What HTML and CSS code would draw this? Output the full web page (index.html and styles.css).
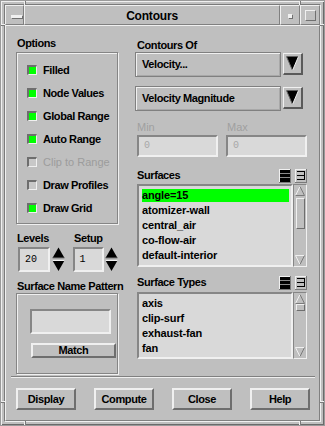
FILE: index.html
```html
<!DOCTYPE html>
<html>
<head>
<meta charset="utf-8">
<link rel="stylesheet" href="styles.css">
</head>
<body>
<div class="win">
  <div class="frame">
    <div class="titlebar">
      <div class="tb-cell tb-menu"><span class="menu-bar"></span></div>
      <div class="tb-cell tb-title">Contours</div>
      <div class="tb-cell tb-min"><span class="min-box"></span></div>
      <div class="tb-cell tb-max"><span class="max-box"></span></div>
    </div>
    <div class="panel">
      <div class="main">
        <div class="col-left">
          <div class="lbl">Options</div>
          <div class="group opts">
            <div class="chk"><span class="ind on"></span>Filled</div>
            <div class="chk"><span class="ind on"></span>Node Values</div>
            <div class="chk"><span class="ind on"></span>Global Range</div>
            <div class="chk"><span class="ind on"></span>Auto Range</div>
            <div class="chk dis"><span class="ind"></span>Clip to Range</div>
            <div class="chk"><span class="ind"></span>Draw Profiles</div>
            <div class="chk"><span class="ind on"></span>Draw Grid</div>
          </div>
          <div class="spin-labels"><span class="lbl-levels">Levels</span><span>Setup</span></div>
          <div class="spin-row">
            <div class="field num levels">20</div>
            <svg class="spin" width="13" height="25" viewBox="0 0 13 25">
              <polygon points="6.5,0.5 0.5,11 12.5,11" fill="#000"/>
              <polyline points="0.5,11 12.5,11" fill="none" stroke="#7a7a7a"/>
              <polygon points="0.5,13.5 12.5,13.5 6.5,24" fill="#000"/>
              <polyline points="0.5,13.5 12.5,13.5" fill="none" stroke="#f0f0f0"/>
            </svg>
            <div class="field num setup">1</div>
            <svg class="spin" width="13" height="25" viewBox="0 0 13 25">
              <polygon points="6.5,0.5 0.5,11 12.5,11" fill="#000"/>
              <polyline points="0.5,11 12.5,11" fill="none" stroke="#7a7a7a"/>
              <polygon points="0.5,13.5 12.5,13.5 6.5,24" fill="#000"/>
              <polyline points="0.5,13.5 12.5,13.5" fill="none" stroke="#f0f0f0"/>
            </svg>
          </div>
          <div class="lbl lbl-pattern">Surface Name Pattern</div>
          <div class="group pattern">
            <div class="field pat-field"></div>
            <button class="btn match">Match</button>
          </div>
        </div>
        <div class="col-right">
          <div class="lbl">Contours Of</div>
          <div class="opt-row">
            <div class="optmenu">Velocity...</div>
            <div class="arrowbtn">
              <svg width="13" height="15" viewBox="0 0 13 15">
                <polygon points="0.5,0.5 12.5,0.5 6.5,14.5" fill="#000"/>
                <polyline points="0.5,0.5 6.5,14.5" fill="none" stroke="#666"/>
                <polyline points="12.5,0.5 6.5,14.5" fill="none" stroke="#f0f0f0"/>
              </svg>
            </div>
          </div>
          <div class="opt-row second">
            <div class="optmenu">Velocity Magnitude</div>
            <div class="arrowbtn">
              <svg width="13" height="15" viewBox="0 0 13 15">
                <polygon points="0.5,0.5 12.5,0.5 6.5,14.5" fill="#000"/>
                <polyline points="0.5,0.5 6.5,14.5" fill="none" stroke="#666"/>
                <polyline points="12.5,0.5 6.5,14.5" fill="none" stroke="#f0f0f0"/>
              </svg>
            </div>
          </div>
          <div class="minmax-labels"><span class="lbl-min">Min</span><span>Max</span></div>
          <div class="minmax">
            <div class="field disf">0</div>
            <div class="field disf">0</div>
          </div>
          <div class="list-head">
            <span>Surfaces</span>
            <span class="icons">
              <svg width="12" height="14" viewBox="0 0 12 14">
                <rect x="0" y="0" width="12" height="14" fill="#7a7a7a"/>
                <rect x="0" y="0" width="11" height="13" fill="#f0f0f0"/>
                <rect x="1" y="1" width="10" height="12" fill="#000"/>
                <rect x="1" y="4" width="10" height="1" fill="#8a8a8a"/>
                <rect x="1" y="8" width="10" height="1" fill="#8a8a8a"/>
              </svg>
              <svg width="12" height="14" viewBox="0 0 12 14">
                <rect x="0" y="0" width="12" height="14" fill="#7a7a7a"/>
                <rect x="0" y="0" width="11" height="13" fill="#f0f0f0"/>
                <rect x="1" y="1" width="10" height="12" fill="#bfbfbf"/>
                <rect x="2" y="2" width="8" height="1" fill="#000"/>
                <rect x="2" y="6" width="8" height="1" fill="#000"/>
                <rect x="2" y="10" width="8" height="1" fill="#000"/>
                <rect x="9" y="2" width="1" height="9" fill="#000"/>
              </svg>
            </span>
          </div>
          <div class="listwrap tall">
            <div class="list">
              <div class="item sel">angle=15</div>
              <div class="item">atomizer-wall</div>
              <div class="item">central_air</div>
              <div class="item">co-flow-air</div>
              <div class="item">default-interior</div>
            </div>
            <div class="sbar">
              <svg class="sarrow" width="10" height="10" viewBox="0 0 10 10">
                <polyline points="0.5,9.5 5,0.5" fill="none" stroke="#f0f0f0"/>
                <polyline points="5,0.5 9.5,9.5 0.5,9.5" fill="none" stroke="#7a7a7a"/>
              </svg>
              <div class="slider big"></div>
              <svg class="sarrow down" width="10" height="10" viewBox="0 0 10 10">
                <polyline points="9.5,0.5 0.5,0.5 5,9.5" fill="none" stroke="#f0f0f0"/>
                <polyline points="5,9.5 9.5,0.5" fill="none" stroke="#7a7a7a"/>
              </svg>
            </div>
          </div>
          <div class="list-head types">
            <span>Surface Types</span>
            <span class="icons">
              <svg width="12" height="14" viewBox="0 0 12 14">
                <rect x="0" y="0" width="12" height="14" fill="#7a7a7a"/>
                <rect x="0" y="0" width="11" height="13" fill="#f0f0f0"/>
                <rect x="1" y="1" width="10" height="12" fill="#000"/>
                <rect x="1" y="4" width="10" height="1" fill="#8a8a8a"/>
                <rect x="1" y="8" width="10" height="1" fill="#8a8a8a"/>
              </svg>
              <svg width="12" height="14" viewBox="0 0 12 14">
                <rect x="0" y="0" width="12" height="14" fill="#7a7a7a"/>
                <rect x="0" y="0" width="11" height="13" fill="#f0f0f0"/>
                <rect x="1" y="1" width="10" height="12" fill="#bfbfbf"/>
                <rect x="2" y="2" width="8" height="1" fill="#000"/>
                <rect x="2" y="6" width="8" height="1" fill="#000"/>
                <rect x="2" y="10" width="8" height="1" fill="#000"/>
                <rect x="9" y="2" width="1" height="9" fill="#000"/>
              </svg>
            </span>
          </div>
          <div class="listwrap short">
            <div class="list">
              <div class="item">axis</div>
              <div class="item">clip-surf</div>
              <div class="item">exhaust-fan</div>
              <div class="item">fan</div>
            </div>
            <div class="sbar">
              <svg class="sarrow" width="10" height="10" viewBox="0 0 10 10">
                <polyline points="0.5,9.5 5,0.5" fill="none" stroke="#f0f0f0"/>
                <polyline points="5,0.5 9.5,9.5 0.5,9.5" fill="none" stroke="#7a7a7a"/>
              </svg>
              <div class="slider small"></div>
              <svg class="sarrow down" width="10" height="10" viewBox="0 0 10 10">
                <polyline points="9.5,0.5 0.5,0.5 5,9.5" fill="none" stroke="#f0f0f0"/>
                <polyline points="5,9.5 9.5,0.5" fill="none" stroke="#7a7a7a"/>
              </svg>
            </div>
          </div>
        </div>
      </div>
      <div class="sep"></div>
      <div class="buttons">
        <button class="btn act">Display</button>
        <button class="btn act">Compute</button>
        <button class="btn act">Close</button>
        <button class="btn act">Help</button>
      </div>
    </div>
  </div>
  <span class="tick vt t-l"></span>
  <span class="tick vt t-r"></span>
  <span class="tick vt b-l"></span>
  <span class="tick vt b-r"></span>
  <span class="tick hz l-t"></span>
  <span class="tick hz l-b"></span>
  <span class="tick hz r-t"></span>
  <span class="tick hz r-b"></span>
</div>
</body>
</html>
```

FILE: styles.css
```css
html, body {
  margin: 0;
  padding: 0;
  background: #bfbfbf;
}
body {
  font-family: "Liberation Sans", Arial, sans-serif;
  font-weight: bold;
  font-size: 11px;
  letter-spacing: -0.4px;
  color: #000;
}
.win {
  position: relative;
  width: 325px;
  height: 426px;
  box-sizing: border-box;
  border: 1px solid #9a9a9a;
  box-shadow: inset 1px 1px #f0f0f0, inset -1px -1px #6a6a6a;
  padding: 3px;
  display: flex;
  flex-direction: column;
  background: #bfbfbf;
}
.frame {
  flex: 1;
  display: flex;
  flex-direction: column;
  border: 1px solid;
  border-color: #7a7a7a #f0f0f0 #f0f0f0 #7a7a7a;
}
.titlebar {
  display: flex;
  height: 20px;
}
.tb-cell {
  box-sizing: border-box;
  border: 1px solid;
  border-color: #f0f0f0 #808080 #808080 #f0f0f0;
  display: flex;
  align-items: center;
  justify-content: center;
}
.tb-menu { width: 19px; }
.tb-title {
  flex: 1;
  font-size: 12px;
  letter-spacing: -0.2px;
  padding-top: 1px;
}
.tb-min { width: 20px; }
.tb-max { width: 20px; }
.menu-bar {
  width: 11px;
  height: 3px;
  margin-left: 3px;
  margin-top: 2px;
  background: #f0f0f0;
  box-shadow: 1px 1px #707070;
}
.min-box {
  width: 4px;
  height: 4px;
  margin-top: 1px;
  background: #f0f0f0;
  box-shadow: 1px 1px #707070;
}
.max-box {
  width: 11px;
  height: 11px;
  box-sizing: border-box;
  border: 1px solid;
  border-color: #f0f0f0 #707070 #707070 #f0f0f0;
}
.panel {
  flex: 1;
  border: 1px solid;
  border-color: #f0f0f0 #808080 #808080 #f0f0f0;
}
.main {
  display: flex;
  padding: 10px 0 0 10px;
}
.col-left {
  width: 102px;
  display: flex;
  flex-direction: column;
}
.col-right {
  width: 172px;
  margin-left: 17px;
  padding-top: 2px;
  display: flex;
  flex-direction: column;
}
.lbl {
  height: 14px;
  line-height: 14px;
  padding-left: 1px;
  white-space: nowrap;
}
.col-right .lbl { padding-left: 2px; }
.group {
  box-sizing: border-box;
  border: 1px solid #858585;
  box-shadow: inset 1px 1px #f0f0f0, 1px 1px #f0f0f0;
}
.opts {
  margin-top: 2px;
  height: 172px;
  padding: 5px 0 0 10px;
}
.chk {
  height: 23px;
  display: flex;
  align-items: center;
  white-space: nowrap;
}
.ind {
  width: 10px;
  height: 10px;
  box-sizing: border-box;
  border-style: solid;
  border-width: 2px 1px 1px 2px;
  border-color: #6e6e6e #f0f0f0 #f0f0f0 #6e6e6e;
  background: #c8c8c8;
  margin-right: 6px;
  flex: none;
}
.ind.on { background: #00ff00; }
.chk.dis {
  color: #9c9c9c;
  font-weight: normal;
  letter-spacing: 0;
}
.spin-labels {
  margin-top: 7px;
  height: 14px;
  line-height: 14px;
  display: flex;
  padding-left: 1px;
}
.lbl-levels { width: 57px; }
.spin-row {
  margin-top: 2px;
  height: 25px;
  display: flex;
  align-items: flex-start;
}
.field {
  box-sizing: border-box;
  background: #d9d9d9;
  border: 2px solid;
  border-color: #868686 #f0f0f0 #f0f0f0 #868686;
}
.num {
  width: 33px;
  height: 25px;
  font-family: "Liberation Mono", "Courier New", monospace;
  font-weight: normal;
  font-size: 10px;
  letter-spacing: 0;
  line-height: 21px;
  padding-left: 5px;
}
.levels { margin-left: 2px; }
.spin { margin-left: 2px; flex: none; }
.setup { margin-left: 8px; }
.setup + .spin { margin-left: 1px; }
.lbl-pattern {
  margin-top: 8px;
  height: 13px;
  line-height: 13px;
}
.pattern {
  height: 81px;
  padding: 15px 0 0 13px;
}
.pat-field {
  width: 81px;
  height: 25px;
}
.btn {
  box-sizing: border-box;
  border: 2px solid;
  border-color: #f0f0f0 #6e6e6e #6e6e6e #f0f0f0;
  background: #bfbfbf;
  font: inherit;
  letter-spacing: inherit;
  color: #000;
  padding: 0;
  margin: 0;
  display: block;
}
.match {
  margin-top: 9px;
  margin-left: 1px;
  width: 85px;
  height: 15px;
  line-height: 11px;
}
.opt-row {
  display: flex;
  align-items: flex-start;
}
.opt-row.second { margin-top: 9px; }
.optmenu {
  box-sizing: border-box;
  width: 146px;
  height: 25px;
  border: 1px solid #808080;
  box-shadow: inset 1px 1px #f0f0f0, inset -1px -1px #a8a8a8;
  line-height: 23px;
  padding-left: 6px;
  white-space: nowrap;
}
.arrowbtn {
  box-sizing: border-box;
  width: 20px;
  height: 22px;
  margin-left: 2px;
  margin-top: 1px;
  border-style: solid;
  border-width: 1px 2px 2px 1px;
  border-color: #f0f0f0 #5a5a5a #5a5a5a #f0f0f0;
  display: flex;
  align-items: center;
  justify-content: center;
}
.minmax-labels {
  margin-top: 9px;
  height: 14px;
  line-height: 14px;
  display: flex;
  padding-left: 2px;
  color: #a0a0a0;
  font-weight: normal;
  letter-spacing: 0;
}
.lbl-min { width: 90px; }
.minmax {
  margin-top: 1px;
  display: flex;
  padding-left: 2px;
  gap: 8px;
}
.disf {
  width: 81px;
  height: 22px;
  font-family: "Liberation Mono", "Courier New", monospace;
  font-weight: normal;
  font-size: 10px;
  letter-spacing: 0;
  color: #a8a8a8;
  line-height: 18px;
  padding-left: 5px;
}
.list-head {
  margin-top: 10px;
  height: 16px;
  display: flex;
  align-items: center;
  justify-content: space-between;
  padding-left: 2px;
}
.list-head.types { margin-top: 7px; }
.icons {
  display: flex;
  gap: 4px;
  align-self: flex-end;
  height: 14px;
}
.icons svg { display: block; }
.listwrap {
  display: flex;
  margin-left: 2px;
  margin-top: 1px;
  width: 170px;
}
.listwrap.tall { height: 83px; }
.listwrap.short { height: 67px; margin-top: 2px; }
.list {
  flex: 1;
  box-sizing: border-box;
  background: #d9d9d9;
  border: 2px solid;
  border-color: #868686 #f0f0f0 #f0f0f0 #868686;
  padding-top: 3px;
  overflow: hidden;
}
.item {
  height: 13px;
  line-height: 13px;
  margin: 0 2px 2px 3px;
  letter-spacing: -0.15px;
  white-space: nowrap;
}
.item.sel { background: #00ff00; }
.sbar {
  width: 14px;
  box-sizing: border-box;
  border: 1px solid;
  border-color: #868686 #f0f0f0 #f0f0f0 #868686;
  background: #bfbfbf;
  display: flex;
  flex-direction: column;
  align-items: center;
  padding: 1px 0;
}
.sarrow { display: block; flex: none; }
.sarrow.down { margin-top: auto; }
.slider {
  box-sizing: border-box;
  width: 9px;
  margin-top: 2px;
  border: 1px solid;
  border-color: #f0f0f0 #6e6e6e #6e6e6e #f0f0f0;
}
.slider.big { height: 31px; }
.slider.small { height: 7px; margin-top: 0; }
.sep {
  margin: 2px 4px 0 5px;
  height: 0;
  border-top: 1px solid #808080;
  border-bottom: 1px solid #f0f0f0;
}
.buttons {
  display: flex;
  gap: 18px;
  padding-left: 10px;
  margin-top: 10px;
}
.act {
  width: 60px;
  height: 22px;
}
.tick {
  position: absolute;
  box-sizing: border-box;
}
.tick.vt {
  width: 2px;
  height: 4px;
  border-left: 1px solid #f0f0f0;
  border-right: 1px solid #7a7a7a;
}
.tick.hz {
  width: 4px;
  height: 2px;
  border-top: 1px solid #f0f0f0;
  border-bottom: 1px solid #7a7a7a;
}
.t-l { left: 23px; top: 0; }
.t-r { left: 298px; top: 0; }
.b-l { left: 23px; bottom: 0; }
.b-r { left: 298px; bottom: 0; }
.l-t { left: 0; top: 23px; }
.l-b { left: 0; top: 400px; }
.r-t { right: 0; top: 23px; }
.r-b { right: 0; top: 400px; }
```
